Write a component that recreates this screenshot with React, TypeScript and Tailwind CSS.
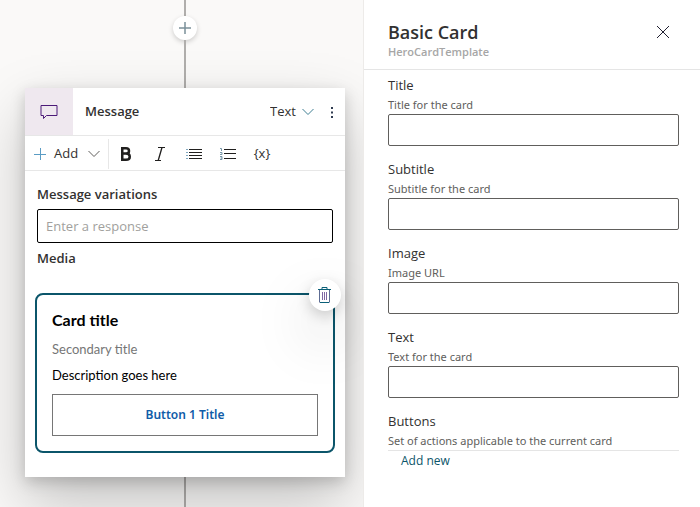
import type { ReactNode } from 'react';

const DEPTH = 'shadow-[0_26px_58px_rgba(0,0,0,0.22),0_5px_14px_rgba(0,0,0,0.18)]';

const FIELDS = [
  { id: 'title', label: 'Title', hint: 'Title for the card' },
  { id: 'subtitle', label: 'Subtitle', hint: 'Subtitle for the card' },
  { id: 'image', label: 'Image', hint: 'Image URL' },
  { id: 'text', label: 'Text', hint: 'Text for the card' },
];

function Chevron({ className = '' }: { className?: string }) {
  return (
    <svg className={className} width="12" height="8" viewBox="0 0 12 8" fill="none" stroke="currentColor" aria-hidden="true">
      <path d="M.5 1 6 6.5 11.5 1" />
    </svg>
  );
}

function ToolButton({ label, children }: { label: string; children: ReactNode }) {
  return (
    <button type="button" aria-label={label} className="flex h-8 w-[34px] items-center justify-center text-[#201f1e]">
      {children}
    </button>
  );
}

function MessageHeader() {
  return (
    <header className="flex h-12 items-center border-b border-[#e7e7e7]">
      <div className="flex h-full w-12 items-center justify-center bg-[#efe8ef] text-[#4b1a78]">
        <svg width="18" height="16" viewBox="0 0 18 16" fill="none" stroke="currentColor" aria-hidden="true">
          <path d="M1 1.500h16v10H6.500L3.500 14.500v-3H1z" />
        </svg>
      </div>
      <h2 className="ml-3 flex-1 text-[13px] font-semibold">Message</h2>
      <div className="relative flex items-center">
        <select aria-label="Response type" className="w-11 appearance-none bg-transparent text-[13px] outline-none">
          <option>Text</option>
        </select>
        <Chevron className="pointer-events-none absolute right-0 text-[#3f7f92]" />
      </div>
      <button type="button" aria-label="More" className="flex h-8 w-[31px] items-center justify-center pl-1">
        <svg width="4" height="14" viewBox="0 0 4 14" fill="#2f3b50" aria-hidden="true">
          <path d="M1 2h2v2H1zM1 6.500h2v2H1zM1 11h2v2H1z" />
        </svg>
      </button>
    </header>
  );
}

function Toolbar() {
  return (
    <div role="toolbar" aria-label="Formatting" className="flex h-[35px] items-center border-b border-[#e7e7e7] pt-0.5">
      <button type="button" className="flex h-[30px] w-[84px] items-center border-r border-[#e7e7e7] pl-[9px] text-[13px]">
        <svg width="12" height="12" viewBox="0 0 12 12" fill="none" stroke="#5a9cc4" aria-hidden="true">
          <path d="M0 6.500h12M6.500 0v12" />
        </svg>
        <span className="ml-2 flex-1 text-left">Add</span>
        <Chevron className="mr-2 text-[#605e5c]" />
      </button>
      <ToolButton label="Bold">
        <svg width="12" height="14" viewBox="0 0 12 14" fill="none" stroke="currentColor" strokeWidth="2.500" aria-hidden="true">
          <path d="M2.250 1.250v11.500M1 1.250h5c4 0 4 5.250 0 5.250H2M6 6.500c5 0 5 6.250 0 6.250H1" />
        </svg>
      </ToolButton>
      <ToolButton label="Italic">
        <svg width="10" height="14" viewBox="0 0 10 14" fill="none" stroke="currentColor" aria-hidden="true">
          <path d="M3 .5h7M0 13.500h6" />
          <path d="M7 .5 3.200 13.500" strokeWidth="1.300" />
        </svg>
      </ToolButton>
      <ToolButton label="Bulleted list">
        <svg width="18" height="12" viewBox="0 0 18 12" fill="none" aria-hidden="true">
          <path stroke="currentColor" d="M4 1.500h13M4 4.500h13M4 7.500h13M4 10.500h13" />
          <path stroke="#80a8c0" d="M1 1.500h2M1 4.500h2M1 7.500h2M1 10.500h2" />
        </svg>
      </ToolButton>
      <ToolButton label="Numbered list">
        <svg width="18" height="12" viewBox="0 0 18 12" fill="none" aria-hidden="true">
          <path stroke="currentColor" d="M5 1.500h12M5 5.500h12M5 10.500h12" />
          <path stroke="#7796a8" d="M1 .5h1.500V3M1 4.500h2v2H1M1 8.500h2v3H1M1.500 10H3" />
        </svg>
      </ToolButton>
      <button type="button" aria-label="Insert variable" className="flex h-8 w-[34px] items-center justify-center text-[13px] font-medium">
        {'{x}'}
      </button>
    </div>
  );
}

function MediaCard() {
  return (
    <article className="relative -mx-0.5 rounded-lg border-2 border-[#0b556a] p-[15px] font-['Lato','Open_Sans',sans-serif] text-black">
      <h3 className="text-[16px] leading-5 font-bold">Card title</h3>
      <p className="mt-[11px] text-[13px] leading-4 text-[#767676]">Secondary title</p>
      <p className="mt-2.5 text-[13px] leading-4">Description goes here</p>
      <button
        type="button"
        className="mt-[11px] h-[42px] w-full border border-[#767676] font-['Noto_Sans','Open_Sans',sans-serif] text-[12px] font-semibold text-[#0f5ca8]"
      >
        Button 1 Title
      </button>
      <button
        type="button"
        aria-label="Delete card"
        className={`absolute -top-4 -right-2 flex size-8 items-center justify-center rounded-full bg-white ${DEPTH}`}
      >
        <svg width="14" height="16" viewBox="0 0 14 16" fill="none" stroke="#0b6078" aria-hidden="true">
          <path d="M0 2.500h13M4 2.500v-2h5v2M2 15.500h9" />
          <path stroke="#5d6c93" d="M1.500 3v12.500M11.500 3v12.500" />
          <path stroke="#8067a3" d="M4.500 5v8M6.500 5v8M8.500 5v8" />
        </svg>
      </button>
    </article>
  );
}

function Canvas() {
  return (
    <main className="flex min-w-0 flex-1 flex-col items-center overflow-hidden bg-[#faf9f8] pr-[18px] pl-[25px]">
      <div className="h-4 w-0.5 bg-[#b0aeac]" />
      <button
        type="button"
        aria-label="Add node"
        className="flex size-6 items-center justify-center rounded-full bg-white shadow-[0_2px_5px_rgba(0,0,0,0.18)]"
      >
        <svg width="14" height="14" viewBox="0 0 14 14" fill="none" stroke="#7b9099" strokeWidth="1.500" aria-hidden="true">
          <path d="M1 7h12M7 1v12" />
        </svg>
      </button>
      <div className="h-12 w-0.5 bg-[#b0aeac]" />
      <section className={`relative w-full bg-white pb-6 ${DEPTH}`}>
        <MessageHeader />
        <Toolbar />
        <div className="px-3 pt-[13px]">
          <label htmlFor="response" className="block text-[13px] leading-5 font-semibold">
            Message variations
          </label>
          <input
            id="response"
            placeholder="Enter a response"
            className="mt-[5px] h-[34px] w-full rounded-xs border border-black px-2 text-[13px] outline-none placeholder:text-[#a19f9d]"
          />
          <h3 className="mt-[5px] mb-[25px] text-[13px] leading-5 font-semibold">Media</h3>
          <MediaCard />
        </div>
      </section>
      <div className="w-0.5 flex-1 bg-[#b0aeac]" />
    </main>
  );
}

function PropertyPanel() {
  return (
    <aside className="w-[337px] shrink-0 border-l border-[#edebe9] bg-white">
      <header className="flex h-[70px] items-start justify-between border-b border-[#e5e5e5] pt-5 pr-[25px] pl-6">
        <div>
          <h1 className="text-[18px] leading-6 font-semibold">Basic Card</h1>
          <p className="text-[11px] leading-4 font-semibold text-[#a6a6a6]">HeroCardTemplate</p>
        </div>
        <button type="button" aria-label="Close" className="flex size-6 items-center justify-center">
          <svg width="12" height="12" viewBox="0 0 12 12" fill="none" stroke="#201f30" aria-hidden="true">
            <path d="m0 0 12 12M12 0 0 12" />
          </svg>
        </button>
      </header>
      <form className="pt-[5px] pr-[21px] pl-6">
        {FIELDS.map((field) => (
          <div key={field.id} className="mb-[13px]">
            <label htmlFor={field.id} className="block text-[13px] leading-5">
              {field.label}
            </label>
            <p
              id={`${field.id}-hint`}
              className="mt-0.5 mb-px font-['Noto_Sans','Open_Sans',sans-serif] text-[11px] leading-4 text-[#605e5c]"
            >
              {field.hint}
            </p>
            <input
              id={field.id}
              aria-describedby={`${field.id}-hint`}
              className="block h-8 w-full rounded-xs border border-[#605e5c] px-2 text-[13px] outline-none"
            />
          </div>
        ))}
        <h2 className="text-[13px] leading-5">Buttons</h2>
        <p className="mt-0.5 mb-px font-['Noto_Sans','Open_Sans',sans-serif] text-[11px] leading-4 text-[#605e5c]">
          Set of actions applicable to the current card
        </p>
        <div className="border-t border-[#e5e5e5] px-[13px]">
          <button type="button" className="block text-[12px] leading-5 text-[#0b556a]">
            Add new
          </button>
        </div>
      </form>
    </aside>
  );
}

export default function App() {
  return (
    <div className="flex min-h-screen font-['Open_Sans','Noto_Sans',sans-serif] text-[#323130]">
      <Canvas />
      <PropertyPanel />
    </div>
  );
}
